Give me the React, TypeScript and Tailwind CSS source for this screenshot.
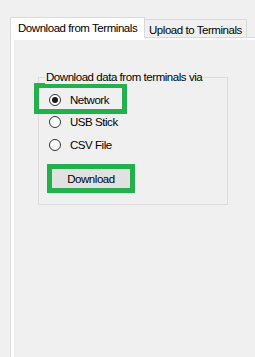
import React from 'react';

const options = ['Network', 'USB Stick', 'CSV File'];

const Radio: React.FC<{ checked?: boolean }> = ({ checked }) => (
  <span className="w-[12px] h-[12px] rounded-full border border-[#333333] bg-white flex items-center justify-center shrink-0">
    {checked && <span className="w-[6px] h-[6px] rounded-full bg-[#1a1a1a]" />}
  </span>
);

const App: React.FC = () => {
  return (
    <div
      className="w-[255px] h-[357px] overflow-hidden bg-[#f0f0f0] pt-[17px] pl-[10px] flex flex-col text-[11.5px] tracking-[-0.45px] text-black"
      style={{ fontFamily: '"Liberation Sans", Arial, sans-serif' }}
    >
      {/* tab strip */}
      <div className="flex items-end h-[20px]">
        <div className="relative z-10 -mb-px h-[21px] w-[135px] border border-b-0 border-[#d9d9d9] bg-white pl-[7px] pt-[3px] leading-[14px] whitespace-nowrap">
          Download from Terminals
        </div>
        <div className="h-[18px] w-[102px] border-t border-r border-[#d9d9d9] bg-[#f0f0f0] pl-[4px] pt-[3px] leading-[14px] whitespace-nowrap">
          Upload to Terminals
        </div>
      </div>

      {/* tab page */}
      <div className="flex-1 border-l border-t border-[#d9d9d9] bg-white pl-[3px] pt-[2px]">
        <div className="h-full bg-[#f0f0f0] pt-[37px] pl-[24px]">
          <div className="relative w-[190px] h-[128px] border border-[#dcdcdc] pt-[10px]">
            <span className="absolute left-[6px] top-[-8px] px-[1px] bg-[#f0f0f0] leading-[14px] whitespace-nowrap">
              Download data from terminals via
            </span>

            {options.map((o, i) => (
              <div
                key={o}
                className={
                  i === 0
                    ? 'flex items-center w-[83px] h-[21px] pt-[2px] pl-[10px] outline-[5px] outline-solid outline-[#22b14c]'
                    : 'flex items-center h-[23px] pl-[10px] ' + (i === 1 ? 'mt-px' : '')
                }
              >
                <Radio checked={i === 0} />
                <span className="ml-[9px] leading-[14px]">{o}</span>
              </div>
            ))}

            <button className="ml-[13px] mt-[13px] w-[78px] h-[19px] bg-[#e1e1e1] outline-[5px] outline-solid outline-[#22b14c] leading-[14px]">
              Download
            </button>
          </div>
        </div>
      </div>
    </div>
  );
};

export default App;
